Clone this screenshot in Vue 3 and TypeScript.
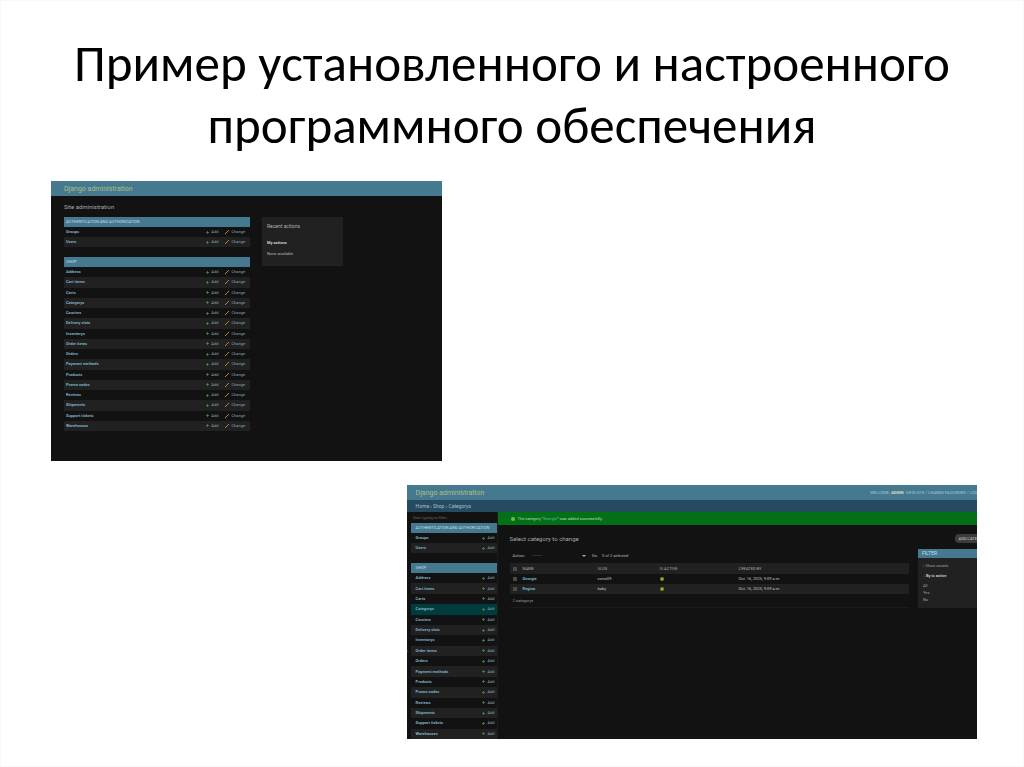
<script setup lang="ts">
const auth: string[] = ['Groups', 'Users']
const shop: string[] = [
  'Address', 'Cart items', 'Carts', 'Categorys', 'Couriers', 'Delivery slots', 'Inventorys', 'Order items',
  'Orders', 'Payment methods', 'Products', 'Promo codes', 'Reviews', 'Shipments', 'Support tickets', 'Warehouses',
]
const sections = [
  { title: 'Authentication and Authorization', items: auth, kind: 'auth' },
  { title: 'Shop', items: shop, kind: 'shop' },
]
const rows = [
  { name: 'Georgie', slug: 'cwrsi09', created: 'Oct. 16, 2025, 9:09 a.m.' },
  { name: 'Regina', slug: 'baby', created: 'Oct. 16, 2025, 9:09 a.m.' },
]
</script>

<template>
  <main class="slide">
    <h1>Пример установленного и настроенного программного обеспечения</h1>

    <section class="shot home">
      <header class="bar"><a href="#" class="brand">Django administration</a></header>
      <div class="home-body">
        <h2>Site administration</h2>
        <div class="home-cols">
          <div class="modules">
            <div v-for="s in sections" :key="s.kind" class="module">
              <h3>{{ s.title }}</h3>
              <ul :class="s.kind">
                <li v-for="i in s.items" :key="i">
                  <a href="#" class="model">{{ i }}</a>
                  <a href="#" class="add"><svg viewBox="0 0 4 4"><path d="M2 0v4M0 2h4" /></svg>Add</a>
                  <a href="#" class="change"><svg viewBox="0 0 4 4"><path d="M0 4L4 0" /></svg>Change</a>
                </li>
              </ul>
            </div>
          </div>
          <aside class="recent">
            <h4>Recent actions</h4>
            <h5>My actions</h5>
            <p>None available</p>
          </aside>
        </div>
      </div>
    </section>

    <section class="shot list">
      <header class="bar">
        <a href="#" class="brand">Django administration</a>
        <div class="tools">WELCOME, <b>ADMIN</b>. <a href="#">VIEW SITE</a> / <a href="#">CHANGE PASSWORD</a> / <a href="#">LOG</a></div>
      </header>
      <nav class="crumbs"><a href="#">Home</a> › <a href="#">Shop</a> › Categorys</nav>
      <div class="list-body">
        <button class="toggle" aria-label="Toggle navigation">»</button>
        <nav class="side">
          <input class="search" type="text" placeholder="Start typing to filter…" aria-label="Filter navigation items">
          <div v-for="s in sections" :key="s.kind" class="module">
            <h3>{{ s.title }}</h3>
            <ul :class="s.kind">
              <li v-for="i in s.items" :key="i" :class="{ current: i === 'Categorys' }">
                <a href="#" class="model">{{ i }}</a>
                <a href="#" class="add"><svg viewBox="0 0 4 4"><path d="M2 0v4M0 2h4" /></svg>Add</a>
              </li>
            </ul>
          </div>
        </nav>
        <div class="content">
          <p class="message">
            <svg viewBox="0 0 4 4"><circle cx="2" cy="2" r="2" /></svg>
            <span>The category “<a href="#">Georgie</a>” was added successfully.</span>
          </p>
          <div class="heading">
            <h2>Select category to change</h2>
            <a href="#" class="add-btn">ADD CATE</a>
          </div>
          <div class="changelist">
            <div class="results">
              <div class="actions">
                <label for="action">Action:</label>
                <select id="action"><option>---------</option></select>
                <svg class="caret" viewBox="0 0 4 4"><path d="M0 1h4L2 3z" /></svg>
                <button>Go</button>
                <span>0 of 2 selected</span>
              </div>
              <table>
                <thead>
                  <tr><th><input type="checkbox" aria-label="Select all"></th><th>NAME</th><th>SLUG</th><th>IS ACTIVE</th><th>CREATED BY</th></tr>
                </thead>
                <tbody>
                  <tr v-for="r in rows" :key="r.name">
                    <td><input type="checkbox" :aria-label="r.name"></td>
                    <td><a href="#">{{ r.name }}</a></td>
                    <td>{{ r.slug }}</td>
                    <td><svg class="yes" viewBox="0 0 4 4"><circle cx="2" cy="2" r="2" /><path d="M1 2l1 1 1-2" /></svg></td>
                    <td>{{ r.created }}</td>
                  </tr>
                </tbody>
              </table>
              <p class="count">2 categorys</p>
            </div>
            <aside class="filter">
              <h3>Filter</h3>
              <a href="#" class="counts">▫ Show counts</a>
              <h4>↓ By is active</h4>
              <a href="#">All</a>
              <a href="#">Yes</a>
              <a href="#">No</a>
            </aside>
          </div>
        </div>
      </div>
    </section>
  </main>
</template>

<style>
body { margin: 0; background: #fff; }
</style>

<style scoped>
* { box-sizing: border-box; }
h1, h2, h3, h4, h5, p, ul { margin: 0; padding: 0; font-weight: 400; list-style: none; }
a { color: inherit; text-decoration: none; }
input, select, button { font: inherit; margin: 0; padding: 0; border: 0; min-width: 0; appearance: none; background: none; color: inherit; }

.slide {
  display: flex; flex-direction: column; min-height: 100vh;
  padding: 33px 47px 28px 51px; box-shadow: inset 0 0 0 1px #f8f8f8; background: #fff;
  font-family: Roboto, "Noto Sans", sans-serif;
}
h1 { font: 400 51px/62px Carlito, Calibri, Lato, "Open Sans", sans-serif; color: #000; text-align: center; margin: 0 0 24px -4px; }

.shot { background: #121212; color: #b5b5b5; font-size: 4px; line-height: 6px; overflow: hidden; }
.home { width: 42.2%; padding-bottom: 30px; align-self: flex-start; }
.list { width: 61.6%; align-self: flex-end; margin-top: 24px; }

.bar { display: flex; align-items: center; height: 15px; background: #447990; overflow: hidden; }
.brand { color: #b2bd84; font-size: 7px; line-height: 10px; margin-left: 13px; white-space: nowrap; }
.home-body { padding: 7px 12px 0 13px; }
h2 { font-size: 6px; line-height: 8px; color: #a8a8a8; }
.home-cols { display: flex; gap: 12px; align-items: flex-start; margin-top: 6px; }
.modules { flex: 1 1 186px; max-width: 186px; }
.module + .module { margin-top: 10px; }
h3 { background: #447990; color: #c5dbe4; font-size: 4px; line-height: 10px; padding-left: 2px; text-transform: uppercase; white-space: nowrap; overflow: hidden; }
ul { display: grid; grid-auto-rows: 1fr; }
.auth { height: 20px; }
.shop { height: 164px; }
li { display: flex; align-items: center; padding: 0 5px 0 2px; color: #7eafc2; }
li:nth-child(even) { background: #212121; }
.model { flex: 1; font-weight: 700; white-space: nowrap; }
.add, .change { display: flex; align-items: center; gap: 2px; color: #84a6b2; }
.add svg, .change svg { width: 3px; height: 3px; fill: none; stroke: #4f8a44; stroke-width: 1; }
.change { margin-left: 7px; }
.change svg { width: 4px; height: 4px; stroke: #b98528; }
.recent { width: 81px; background: #212121; padding: 6px 5px 9px; }
.recent h4 { font-size: 5px; color: #b0b0b0; }
.recent h5 { font-size: 4px; font-weight: 700; color: #d0d0d0; margin: 11px 0 5px; }

.list .bar { justify-content: space-between; }
.list .brand { margin-left: 9px; }
.tools { white-space: nowrap; color: #a9c6d3; line-height: 6px; }
.tools b { color: #d8dcb0; }
.crumbs { background: #264b60; color: #a5bfca; padding-left: 9px; font-size: 5px; line-height: 12px; }
.list-body { display: flex; }
.toggle { display: flex; align-items: center; width: 4px; flex: none; color: #79aec8; padding-top: 51px; }
.side { width: 87px; flex: none; border-right: 1px solid #1c1c1c; }
.search { display: block; width: 100%; height: 11px; color: #777; padding-left: 2px; line-height: 10px; }
.search::placeholder { color: #686868; }
.side h3 { padding-left: 5px; }
.side li { padding: 0 2px 0 5px; }
.side .shop { height: 166px; }
.side li.current { background: #003b3d; }
.content { flex: 1; min-width: 0; }
.message { display: flex; align-items: center; gap: 3px; height: 13px; background: #027016; color: #b9dfbf; padding-left: 13px; white-space: nowrap; }
.message svg { width: 4px; height: 4px; fill: #6abf45; }
.message a { color: #59b5c2; }
.heading { display: flex; justify-content: space-between; align-items: center; padding-left: 12px; height: 27px; }
.heading h2 { font-size: 6px; }
.add-btn { border-radius: 4px 0 0 4px; background: #3c3c3c; color: #ccc; padding-left: 4px; line-height: 9px; white-space: nowrap; }
.changelist { display: flex; align-items: flex-start; gap: 9px; padding: 0 0 0 12px; margin-top: -3px; }
.results { flex: 1; min-width: 0; }
.actions { display: flex; align-items: center; height: 14px; padding-left: 3px; }
.actions select { width: 54px; height: 8px; margin-left: 3px; padding-left: 4px; color: #999; }
.caret { width: 4px; height: 4px; fill: #aaa; }
.actions button { margin: 0 5px 0 6px; line-height: 6px; }
table { width: 100%; table-layout: fixed; border-collapse: collapse; }
th, td { height: 10px; padding: 0; text-align: left; line-height: 6px; vertical-align: middle; white-space: nowrap; }
th { height: 11px; font-weight: 400; color: #aaa; }
td { color: #c4c4c4; }
td a { color: #79b2ca; font-weight: 700; }
tr > :nth-child(1) { width: 13px; padding-left: 3px; }
tr > :nth-child(2) { width: 75px; }
tr > :nth-child(3) { width: 62px; }
tr > :nth-child(4) { width: 79px; }
thead tr, tbody tr:nth-child(even) { background: #212121; }
td input, th input { display: block; width: 4px; height: 4px; background: #4a4a4a; }
.yes { display: block; width: 4px; height: 4px; fill: #7f8c18; }
.yes path { fill: none; stroke: #b4bc50; stroke-width: 1; }
.count { padding: 4px 3px 3px; border-bottom: 1px solid #1b1b1b; color: #999; }
.filter { width: 59px; background: #212121; padding-bottom: 5px; display: flex; flex-direction: column; }
.filter h3 { font-size: 5px; line-height: 9px; padding-left: 4px; }
.filter a { padding-left: 5px; line-height: 7px; color: #a0a0a0; }
.filter .counts { padding-top: 4px; white-space: nowrap; }
.filter h4 { padding: 4px 0 3px 5px; font-weight: 700; color: #c4c4c4; }
</style>
